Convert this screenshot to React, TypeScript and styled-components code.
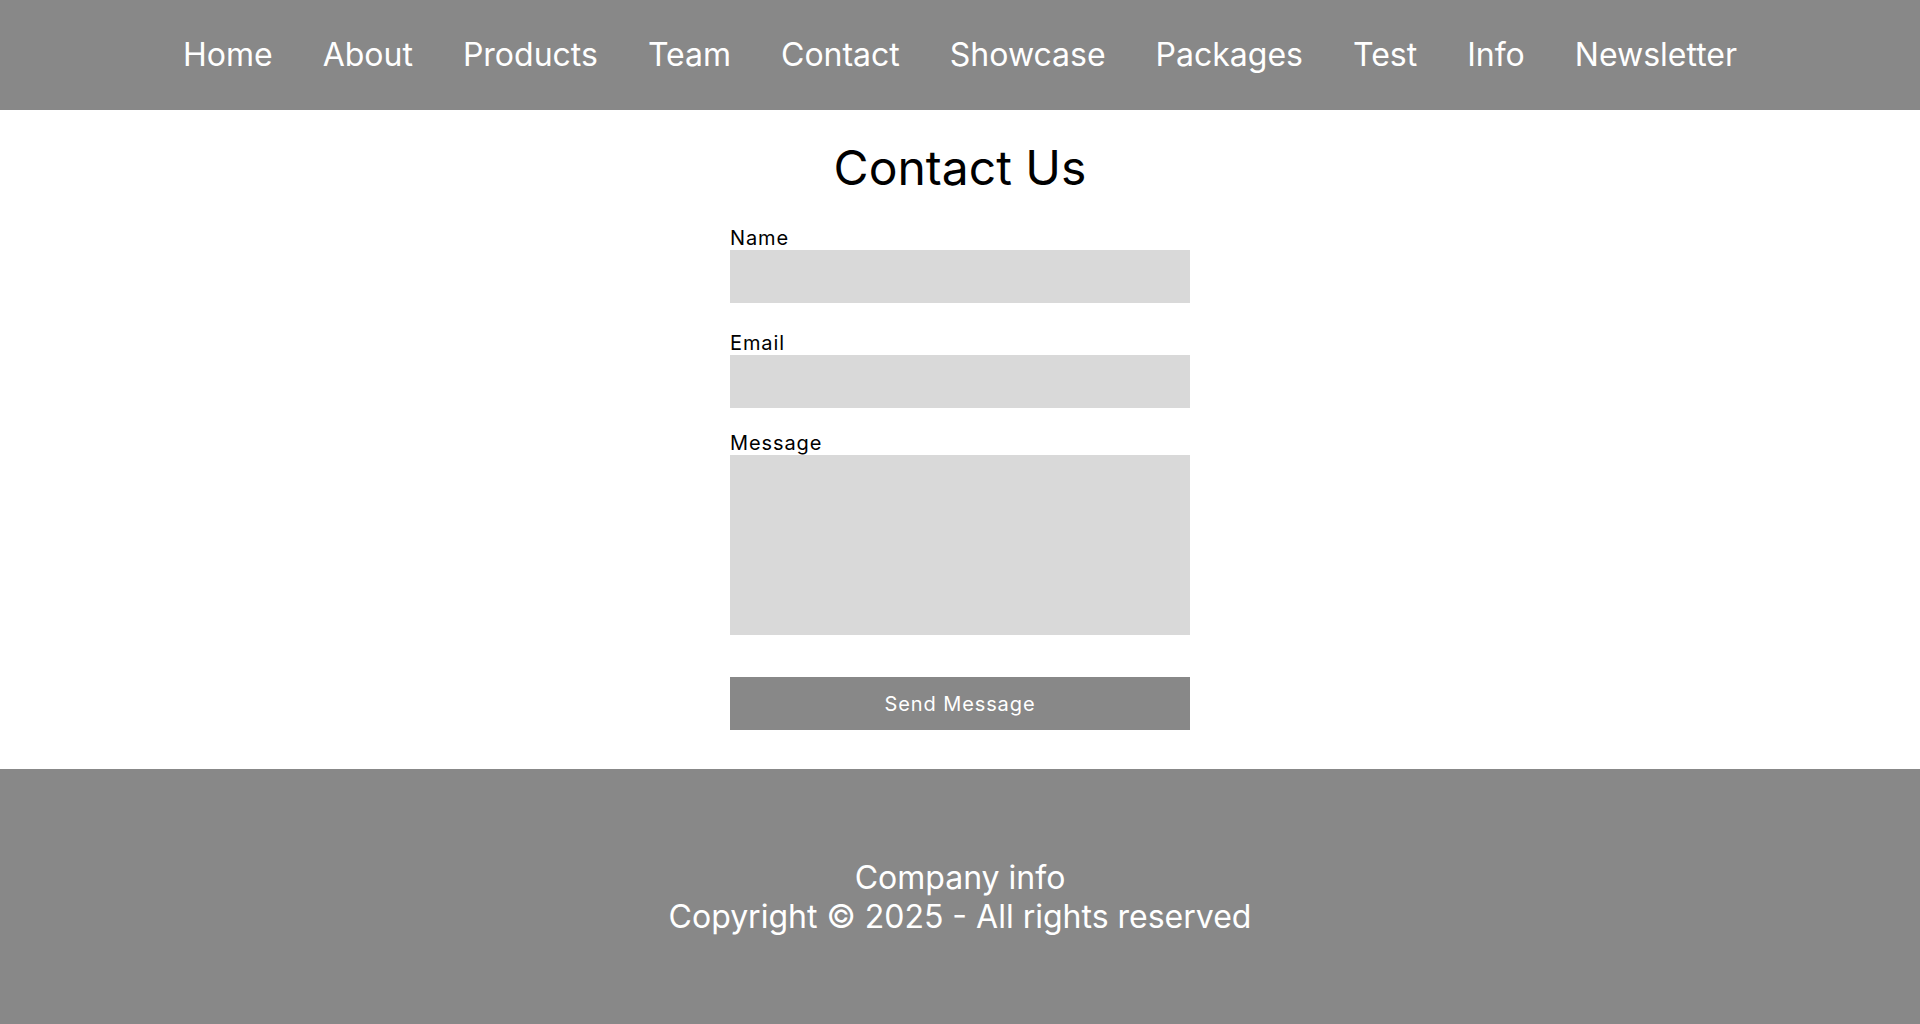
import React from "react";
import styled, { createGlobalStyle } from "styled-components";

const GlobalStyle = createGlobalStyle`
  html, body {
    margin: 0;
    padding: 0;
    background: #ffffff;
    font-family: Inter, "Noto Sans", sans-serif;
  }
  * { box-sizing: border-box; }
`;

const Page = styled.div`
  min-height: 100vh;
  display: flex;
  flex-direction: column;
`;

const NavBar = styled.nav`
  height: 110px;
  background: #888888;
  display: flex;
  align-items: center;
  justify-content: center;
  gap: 50px;
`;

const NavLink = styled.a`
  color: #ffffff;
  font-size: 32px;
  line-height: 1.21;
  text-decoration: none;
  cursor: pointer;
`;

const Main = styled.main`
  flex: 1;
  display: flex;
  flex-direction: column;
  align-items: center;
  padding-top: 29px;
`;

const Title = styled.h1`
  margin: 0 0 29px;
  font-size: 48px;
  font-weight: 400;
  line-height: 1.21;
  color: #000000;
`;

const Form = styled.form`
  width: 460px;
  display: flex;
  flex-direction: column;
`;

const Label = styled.label<{ $top: number }>`
  display: block;
  margin-top: ${(p) => p.$top}px;
  font-size: 20px;
  letter-spacing: 0.9px;
  line-height: 24px;
  color: #000000;
`;

const Input = styled.input`
  display: block;
  width: 100%;
  height: 53px;
  border: none;
  outline: none;
  background: #d9d9d9;
  font-family: inherit;
  font-size: 20px;
  padding: 0 12px;
`;

const TextArea = styled.textarea`
  display: block;
  width: 100%;
  height: 180px;
  border: none;
  outline: none;
  resize: none;
  background: #d9d9d9;
  font-family: inherit;
  font-size: 20px;
  padding: 12px;
`;

const SubmitButton = styled.button`
  margin-top: 42px;
  width: 100%;
  height: 53px;
  border: none;
  background: #888888;
  color: #ffffff;
  font-family: inherit;
  font-size: 20px;
  letter-spacing: 0.9px;
  cursor: pointer;
`;

const Footer = styled.footer`
  height: 255px;
  padding-top: 2px;
  background: #888888;
  display: flex;
  flex-direction: column;
  align-items: center;
  justify-content: center;
  color: #ffffff;
  font-size: 32px;
  line-height: 1.21;
  text-align: center;
`;

const navItems = [
  "Home",
  "About",
  "Products",
  "Team",
  "Contact",
  "Showcase",
  "Packages",
  "Test",
  "Info",
  "Newsletter",
];

export default function App() {
  return (
    <>
      <GlobalStyle />
      <Page>
        <NavBar>
          {navItems.map((item) => (
            <NavLink key={item}>{item}</NavLink>
          ))}
        </NavBar>
        <Main>
          <Title>Contact Us</Title>
          <Form onSubmit={(e) => e.preventDefault()}>
            <Label $top={0}>Name</Label>
            <Input type="text" />
            <Label $top={28}>Email</Label>
            <Input type="email" />
            <Label $top={23}>Message</Label>
            <TextArea />
            <SubmitButton type="submit">Send Message</SubmitButton>
          </Form>
        </Main>
        <Footer>
          <div>Company info</div>
          <div>Copyright © 2025 - All rights reserved</div>
        </Footer>
      </Page>
    </>
  );
}
